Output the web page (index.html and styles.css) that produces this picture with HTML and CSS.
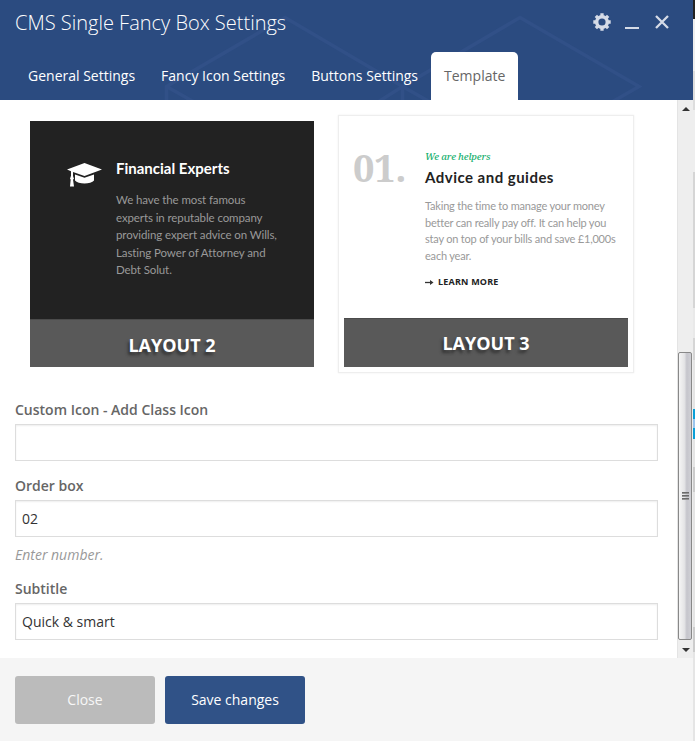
FILE: index.html
```html
<!DOCTYPE html>
<html lang="en">
<head>
<meta charset="utf-8">
<title>CMS Single Fancy Box Settings</title>
<link rel="stylesheet" href="styles.css">
</head>
<body>
<div class="screen">
  <main class="dialog">
    <header class="header">
      <svg class="pattern" width="693" height="100" viewBox="0 0 693 100" aria-hidden="true">
        <path d="M166.500 102V86.500L285 17.500 402.500 86.500V102M166.500 86.500L194 102M378 102L402.500 86.500 520 17.500 639 86.500 612 102M402.500 86.500L430 102" fill="none" stroke="#315087" stroke-width="3.500"/>
      </svg>
      <div class="titlebar">
        <h1 class="title">CMS Single Fancy Box Settings</h1>
        <div class="controls">
          <svg width="18" height="18" viewBox="0 0 18 18"><g fill="none" stroke="#d5dbe7"><circle cx="9" cy="9" r="5.300" stroke-width="3.400"/><path d="M9 .3V3M9 15v2.700M.3 9H3M15 9h2.700M2.850 2.850l2 2M13.150 13.150l2 2M2.850 15.150l2-2M13.150 4.850l2-2" stroke-width="3.300"/></g></svg>
          <svg width="14" height="18" viewBox="0 0 14 18"><path d="M0 15h14" stroke="#d5dbe7" stroke-width="2"/></svg>
          <svg width="14" height="18" viewBox="0 0 14 18"><path d="M1 3l12 12M13 3L1 15" stroke="#d5dbe7" stroke-width="2.300"/></svg>
        </div>
      </div>
      <nav class="tabs">
        <a class="tab">General Settings</a>
        <a class="tab">Fancy Icon Settings</a>
        <a class="tab">Buttons Settings</a>
        <a class="tab active">Template</a>
      </nav>
    </header>
    <div class="body">
      <section class="content">
        <div class="layouts">
          <article class="layout dark">
            <div class="preview">
              <svg class="cap" width="36" height="26" viewBox="0 0 36 26"><path d="M0 6.500L17.500 0 35 6.500 17.500 13 6 9v4l1 3-1 .500 1 7H3l.700-7-.700-.700 1-3V8.300z" fill="#fff"/><path d="M8 11.500l9.500 3.300 9.500-3.300v6c-3 4-16 4-19 0z" fill="#fff"/></svg>
              <div class="copy">
                <h2>Financial Experts</h2>
                <p>We have the most famous<br>experts in reputable company<br>providing expert advice on Wills,<br>Lasting Power of Attorney and<br>Debt Solut.</p>
              </div>
            </div>
            <div class="caption">LAYOUT 2</div>
          </article>
          <article class="layout light">
            <div class="preview">
              <div class="number">01.</div>
              <div class="copy">
                <div class="kicker">We are helpers</div>
                <h2>Advice and guides</h2>
                <p>Taking the time to manage your money<br>better can really pay off. It can help you<br>stay on top of your bills and save £1,000s<br>each year.</p>
                <div class="more"><svg width="9" height="7" viewBox="0 0 9 7"><path d="M0 3.500h7" stroke="#333" stroke-width="1.300"/><path d="M5 1l3.500 2.500L5 6z" fill="#333"/></svg>LEARN MORE</div>
              </div>
            </div>
            <div class="caption">LAYOUT 3</div>
          </article>
        </div>
        <div class="field">
          <label for="icon">Custom Icon - Add Class Icon</label>
          <input id="icon" type="text">
        </div>
        <div class="field">
          <label for="order">Order box</label>
          <input id="order" type="text" value="02">
          <div class="hint">Enter number.</div>
        </div>
        <div class="field">
          <label for="subtitle">Subtitle</label>
          <input id="subtitle" type="text" value="Quick &amp; smart">
        </div>
      </section>
      <div class="scrollbar">
        <div class="arrow up"></div>
        <div class="track"><div class="thumb"><i></i><i></i><i></i></div></div>
        <div class="arrow down"></div>
      </div>
    </div>
    <footer class="footer">
      <button class="btn close">Close</button>
      <button class="btn save">Save changes</button>
    </footer>
  </main>
  <div class="backdrop"></div>
</div>
</body>
</html>
```

FILE: styles.css
```css
* { box-sizing: border-box; }
body { margin: 0; font: 14px/20px "Open Sans", sans-serif; color: #333; overflow: hidden; }
h1, h2, p { margin: 0; }
.screen { display: flex; width: 695px; height: 741px; }
.dialog { width: 693px; display: flex; flex-direction: column; background: #fff; }
.header { position: relative; height: 100px; background: #2b4b80; color: #fff; display: flex; flex-direction: column; }
.pattern { position: absolute; inset: 0; }
.titlebar { position: relative; height: 52px; padding: 9px 24px 0 15px; display: flex; justify-content: space-between; }
.title { font-size: 20px; line-height: 28px; font-weight: 300; letter-spacing: 0; }
.controls { display: flex; gap: 14px; padding-top: 4px; }
.controls svg:last-child { margin-left: 2px; }
.tabs { position: relative; display: flex; height: 48px; padding-left: 15px; }
.tab { padding: 0 13px; line-height: 48px; white-space: nowrap; }
.tab.active { background: #fff; color: #666; border-radius: 5px 5px 0 0; }
.body { display: flex; height: 558px; }
.content { width: 677px; padding: 15px 19px 0 15px; }
.layouts { display: flex; gap: 18px; height: 285px; padding-left: 9px; }
.layout { width: 296px; height: 258px; padding: 6px; display: flex; flex-direction: column; }
.light { border: 1px solid #eee; padding: 5px; box-shadow: 0 0 2px #eee; }
.preview { height: 198px; display: flex; }
.dark .preview { background: #222; padding: 37px 0 0 37px; gap: 13px; }
.cap { margin-top: 5px; }
.copy { white-space: nowrap; font-family: Lato, sans-serif; }
.copy h2 { font-size: 15px; line-height: 20px; font-weight: 700; }
.dark h2 { color: #fff; letter-spacing: 0; }
.dark p { margin-top: 13px; font-size: 11.500px; line-height: 17.600px; letter-spacing: -.1px; color: #999; }
.light .preview { height: 197px; padding: 23px 0 0 9px; }
.number { width: 72px; font: 700 38px/46px "Noto Serif", "DejaVu Serif", serif; letter-spacing: -.4px; color: #ccc; }
.light .copy { padding-top: 6px; }
.kicker { font: italic 500 9.500px/14px "Noto Serif", "Liberation Serif", serif; letter-spacing: -.15px; color: #18b06f; }
.light h2 { color: #222; margin-top: 3px; letter-spacing: .48px; }
.light p { margin-top: 11px; font-size: 11px; line-height: 16.500px; letter-spacing: -.2px; color: #999; }
.more { display: flex; align-items: center; gap: 4px; margin-top: 10px; font: 700 9px/16px "Open Sans", sans-serif; letter-spacing: .2px; color: #222; }
.caption { height: 48px; background: #595959; border-top: 1px solid #4b4b4b; color: #fff; font: 700 18px/50px "Open Sans", sans-serif; text-align: center; text-shadow: -2px 3px 3px #333; }
.light .caption { height: 49px; line-height: 49px; }
.field { margin-bottom: 15px; }
.field label { display: block; font-weight: 600; color: #666; line-height: 20px; margin-bottom: 4px; }
.field input { display: block; width: 643px; height: 37px; padding: 0 6px; border: 1px solid #ddd; box-shadow: inset 0 1px 2px rgba(0,0,0,.07); font: inherit; color: #333; background: #fff; }
.hint { margin-top: 8px; height: 19px; font-style: italic; color: #999; }
.scrollbar { width: 16px; display: flex; flex-direction: column; background: #eee; border-left: 1px solid #e4e4e4; }
.arrow { height: 17px; display: flex; align-items: center; justify-content: center; }
.arrow::after { content: ""; border: 4px solid transparent; }
.up::after { border-bottom-color: #333; border-top: 0; }
.down::after { border-top-color: #333; border-bottom: 0; }
.track { flex: 1; padding-top: 235px; }
.thumb { height: 288px; margin-right: 1px; border: 1px solid #888; border-radius: 2px; background: linear-gradient(90deg, #f5f5f5, #e4e4e6 45%, #c5c5cc 65%, #d0d0d5); display: flex; flex-direction: column; align-items: center; justify-content: center; gap: 1px; }
.thumb i { width: 7px; height: 2px; background: linear-gradient(#555, #aaa); }
.footer { height: 83px; display: flex; gap: 10px; padding: 18px 15px; background: #f5f5f5; }
.btn { width: 140px; height: 48px; padding: 0; border: 0; border-radius: 3px; font: inherit; color: #fff; }
.close { background: #bbb; color: #f7f7f7; }
.save { background: #305287; }
.backdrop { width: 2px; background: linear-gradient(#222 0 19px, #eee 19px 71px, #ddd 71px 110px, #eee 110px 172px, #d5d5d5 172px 308px, #e9e9e9 308px 338px, #d5d5d5 338px 360px, #e5e5e5 360px 409px, #0a9fd8 409px 419px, #9bc5ed 419px 428px, #0a9fd8 428px 439px, #e5e5e5 439px 467px, #ccc 467px 492px, #e5e5e5 492px 627px, #ccc 627px 652px, #e5e5e5 652px); }
```
